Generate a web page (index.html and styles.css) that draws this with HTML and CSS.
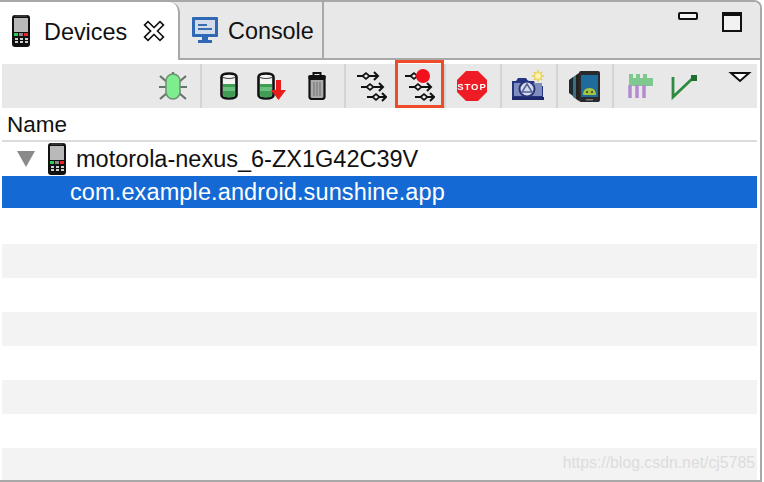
FILE: index.html
```html
<!DOCTYPE html>
<html lang="en">
<head>
  <meta charset="UTF-8">
  <title>Devices</title>
  <link rel="stylesheet" href="styles.css">
</head>
<body>

  <svg class="sprites" width="0" height="0">
    <symbol id="phone" viewBox="0 0 18 32">
      <rect x="0" y="0" width="18" height="32" rx="3" fill="#111"/>
      <rect x="3" y="0" width="12" height="2" fill="#333"/>
      <rect x="2" y="3" width="14" height="14" fill="#b9b9b9"/>
      <rect x="2" y="18" width="4" height="3" fill="#2ecc55"/>
      <rect x="7" y="18" width="4" height="3" fill="#888"/>
      <rect x="12" y="18" width="4" height="3" fill="#e8262a"/>
      <g fill="#cfcfcf">
        <rect x="3" y="23" width="3" height="2"/><rect x="8" y="23" width="3" height="2"/><rect x="13" y="23" width="3" height="2"/>
        <rect x="3" y="26" width="3" height="2"/><rect x="8" y="26" width="3" height="2"/><rect x="13" y="26" width="3" height="2"/>
      </g>
    </symbol>
    <symbol id="threads" viewBox="0 0 32 32">
      <g fill="none" stroke="#111" stroke-width="2.200">
        <path d="M2 6h6M14 6h9"/>
        <path d="M7.500 6l3.500-3 3.500 3-3.500 3z" fill="#eee" stroke-width="1.700"/>
        <path d="M19 2l4 4-4 4" stroke-width="2"/>
        <path d="M6 17h6M18 17h10"/>
        <path d="M11.500 17l3.500-3 3.500 3-3.500 3z" fill="#eee" stroke-width="1.700"/>
        <path d="M24 13l4 4-4 4" stroke-width="2"/>
        <path d="M12 27h6M24 27h7"/>
        <path d="M17.500 27l3.500-3 3.500 3-3.500 3z" fill="#eee" stroke-width="1.700"/>
        <path d="M27 23l4 4-4 4" stroke-width="2"/>
      </g>
    </symbol>
    <symbol id="cylinder" viewBox="0 0 18 28">
      <path d="M1.500 5q0-3.500 7.500-3.500t7.500 3.500v18q0 3.500-7.500 3.500T1.500 23z" fill="#f4f4f4" stroke="#111" stroke-width="2.600"/>
      <path d="M3 5.500q6 2 12 0" fill="none" stroke="#444" stroke-width="1.200"/>
      <path d="M3 12h12v11q0 2.500-6 2.500T3 23z" fill="#3f9d55"/>
      <path d="M3 15h12v4H3z" fill="#6cc07f"/>
    </symbol>
  </svg>

  <div class="view">
    <div class="tabbar">
      <div class="tab tab-active">
        <svg class="icon-phone"><use href="#phone"/></svg>
        <span class="tab-label">Devices</span>
        <svg class="icon-close" viewBox="0 0 20 20">
          <path d="M4 4l12 12M16 4L4 16" stroke="#111" stroke-width="6.500" stroke-linecap="square"/>
          <path d="M4 4l12 12M16 4L4 16" stroke="#fff" stroke-width="3.200" stroke-linecap="square"/>
        </svg>
      </div>
      <div class="tab tab-console">
        <svg class="icon-console" viewBox="0 0 26 26">
          <rect x="0" y="0" width="26" height="20" rx="1" fill="#2f68b4"/>
          <rect x="3" y="3" width="20" height="14" fill="#d4dcea"/>
          <path d="M6 7h9v2H6zM6 11h14v2H6z" fill="#3a6cae"/>
          <path d="M10 20h6v3h4v3H6v-3h4z" fill="#2f68b4"/>
        </svg>
        <span class="tab-label">Console</span>
      </div>
      <div class="win-controls">
        <span class="win-min"></span>
        <span class="win-max"></span>
      </div>
    </div>

    <div class="content">
      <div class="toolbar">
        <div class="group group-first">
          <div class="tool">
            <svg class="icon" viewBox="0 0 32 32">
              <path d="M16 5V2M3 6l7 6M29 6l-7 6M2 17h8M22 17h8M3 29l7-6M29 29l-7-6" stroke="#66756a" stroke-width="2.200" fill="none"/>
              <rect x="9" y="4" width="14" height="25" rx="7" fill="#7ded8e" stroke="#6f8f74" stroke-width="1.500"/>
            </svg>
          </div>
        </div>
        <div class="group group-heap">
          <div class="tool"><svg class="icon-can"><use href="#cylinder"/></svg></div>
          <div class="tool">
            <svg class="icon" viewBox="0 0 32 32">
              <use href="#cylinder" x="0" y="2" width="18" height="28"/>
              <path d="M19 10h5v10h5l-7.500 10L14 20h5z" fill="#e81c1c"/>
            </svg>
          </div>
          <div class="tool">
            <svg class="icon" viewBox="0 0 32 32">
              <path d="M12.500 5V3h7v2" fill="none" stroke="#111" stroke-width="2"/>
              <rect x="7" y="5" width="18" height="4" rx="2" fill="#111"/>
              <path d="M8.500 9h15v18q0 2-3 2h-9q-3 0-3-2z" fill="#aaa" stroke="#111" stroke-width="2.200"/>
              <path d="M13 12v14M16 12v14M19 12v14" stroke="#7a7a7a" stroke-width="1.200"/>
            </svg>
          </div>
        </div>
        <div class="group group-threads">
          <div class="tool-wide"><svg class="icon"><use href="#threads"/></svg></div>
          <div class="tool-wide tool-marked">
            <svg class="icon" viewBox="0 0 32 32">
              <use href="#threads" x="0" y="0" width="32" height="32"/>
              <circle cx="20" cy="6" r="7" fill="#f2101c"/>
            </svg>
          </div>
        </div>
        <div class="group">
          <div class="tool-fill">
            <svg class="icon" viewBox="0 0 32 32">
              <path d="M10 1h12l9 9v12l-9 9H10l-9-9V10z" fill="#ee1c25"/>
              <text class="stop-text" x="16" y="20" text-anchor="middle">STOP</text>
            </svg>
          </div>
        </div>
        <div class="group">
          <div class="tool-fill">
            <svg class="icon" viewBox="0 0 32 32">
              <path d="M26 0v12M20 6h12M22 2l8 8M30 2l-8 8" stroke="#e8cf4a" stroke-width="1.500"/>
              <circle cx="26" cy="6" r="3.500" fill="#fff3b0" stroke="#e8cf4a"/>
              <path d="M0 11h4l2-3h8l2 3h6l2 5h7v14H0z" fill="#26357f"/>
              <rect x="2" y="13" width="28" height="13" fill="#7f8dbd"/>
              <rect x="0" y="27" width="32" height="3" fill="#1c2868"/>
              <circle cx="15" cy="19" r="7.500" fill="#d6dbea" stroke="#26357f" stroke-width="2"/>
              <path d="M15 14l5 8H10z" fill="none" stroke="#55619a" stroke-width="1.500"/>
            </svg>
          </div>
        </div>
        <div class="group">
          <div class="tool-fill">
            <svg class="icon" viewBox="0 0 32 32">
              <path d="M1 10l4-3v19l-4-3z" fill="#1d2a30"/>
              <path d="M5 7l3-2v24l-3-2z" fill="#3c6e80"/>
              <path d="M8 5l3-2v28l-3-2z" fill="#222"/>
              <rect x="11" y="1" width="21" height="31" rx="2" fill="#2a2a2c"/>
              <rect x="13" y="5" width="17" height="22" fill="#1f6c9c"/>
              <path d="M15 25q0-7 6.500-7t6.500 7z" fill="#a5c43b"/>
              <circle cx="19" cy="22" r="1" fill="#333"/>
              <circle cx="24" cy="22" r="1" fill="#333"/>
              <rect x="18" y="29" width="7" height="1.500" fill="#777"/>
            </svg>
          </div>
        </div>
        <div class="group group-last">
          <div class="tool">
            <svg class="icon" viewBox="0 0 32 32">
              <path d="M5 4h4v4h3V4h4v4h3V4h4v4h6v8H5z" fill="#7dc98f"/>
              <path d="M6 15v13M13 15v13M20 15v13" stroke="#b48bd0" stroke-width="3.500"/>
            </svg>
          </div>
          <div class="tool">
            <svg class="icon" viewBox="0 0 32 32">
              <path d="M5 7v20L25 8" fill="none" stroke="#2f8a41" stroke-width="2.800"/>
              <rect x="23" y="5" width="6" height="6" fill="#1f6e31"/>
            </svg>
          </div>
          <div class="tool-menu">
            <svg class="icon" viewBox="0 0 32 32">
              <path d="M7 3h18l-9 8z" fill="#fff" stroke="#111" stroke-width="2"/>
            </svg>
          </div>
        </div>
      </div>

      <div class="tree-head">Name</div>
      <div class="row row-device">
        <svg class="twisty" viewBox="0 0 18 16"><path d="M0 0h18L9 16z" fill="#8a8a8a"/></svg>
        <svg class="icon-phone"><use href="#phone"/></svg>
        <span>motorola-nexus_6-ZX1G42C39V</span>
      </div>
      <div class="row row-selected">com.example.android.sunshine.app</div>
      <div class="row"></div>
      <div class="row row-alt"></div>
      <div class="row"></div>
      <div class="row row-alt"></div>
      <div class="row"></div>
      <div class="row row-alt"></div>
      <div class="row"></div>
      <div class="row row-alt row-end"></div>
    </div>
  </div>

  <div class="watermark">https://blog.csdn.net/cj5785</div>

</body>
</html>
```

FILE: styles.css
```css
* { box-sizing: border-box; }
html, body {
  margin: 0; padding: 0; width: 764px; height: 482px; overflow: hidden;
  font-family: 'Liberation Sans', Arial, sans-serif;
  background-color: white; color: #111;
}
.sprites { display: block; position: absolute; }
svg { display: block; flex: none; overflow: visible; }

.view {
  width: 762px; height: 482px;
  border-top: 2px solid #a8a8a8; border-right: 2px solid #a8a8a8; border-bottom: 2px solid #a8a8a8;
  border-top-right-radius: 8px;
}

.tabbar {
  display: flex; height: 58px; background-color: #e8e8e8;
  border-bottom: 2px solid #a8a8a8; border-top-right-radius: 6px;
}
.tab { display: flex; align-items: center; font-size: 23.400px; }
.tab-label { margin-top: 3px; }
.tab-active {
  width: 180px; height: 58px; padding-left: 12px; background: white;
  border-right: 2px solid #a8a8a8; border-top-right-radius: 10px;
}
.tab-console { width: 144px; padding-left: 12px; border-right: 2px solid #a8a8a8; }
.icon-phone { width: 18px; height: 32px; }
.tab-active .tab-label { margin-left: 14px; }
.tab-console .tab-label { margin-left: 10px; }
.icon-close { width: 20px; height: 20px; margin-left: 17px; }
.icon-console { width: 26px; height: 26px; }

.win-controls { display: flex; gap: 24px; margin-left: auto; padding: 10px 18px 0 0; }
.win-min { width: 20px; height: 8px; border: 2px solid #111; border-radius: 2px; background: #f4f4f4; }
.win-max { width: 20px; height: 20px; border: 2px solid #111; border-top-width: 4px; background: #f2f2f2; }

.content { padding: 4px 3px 0 2px; }

.toolbar { display: flex; height: 44px; margin-bottom: 2px; background-color: #e8e8e8; }
.group { display: flex; width: 56px; border-left: 2px solid #d4d4d4; }
.group-first { width: 198px; justify-content: flex-end; padding-right: 5px; border-left: none; }
.group-heap { width: 144px; padding: 0 5px; }
.group-threads { width: 100px; padding-left: 1px; }
.group-last { flex: 1; padding-left: 4px; }
.tool, .tool-wide, .tool-fill, .tool-menu { display: flex; align-items: center; justify-content: center; }
.tool { width: 44px; }
.tool-wide { width: 48px; }
.tool-fill { width: 52px; }
.tool-menu { width: 34px; margin-left: auto; }
.icon, .icon-can { filter: blur(0.4px); }
.icon { width: 32px; height: 32px; }
.icon-can { width: 18px; height: 28px; }
.stop-text { font-size: 9.500px; font-weight: bold; letter-spacing: 1px; fill: white; }

.tool-marked { position: relative; }
.tool-marked::after {
  content: ""; position: absolute; left: 0; right: -1px; top: -4px; bottom: 0;
  border: 3px solid #ee4b2b;
}

.tree-head {
  height: 32px; padding: 1px 0 0 5px; font-size: 22.500px; line-height: 27px;
  border-bottom: 2px solid #dcdcdc;
}
.row { height: 34px; font-size: 23.500px; }
.row-device { display: flex; align-items: center; padding-left: 15px; }
.twisty { width: 18px; height: 16px; margin-right: 13px; }
.row-device span { margin-left: 10px; }
.row-selected {
  height: 32px; margin-bottom: 2px; padding-left: 68px; line-height: 32px;
  letter-spacing: 0.12px; background-color: #1569d4; color: white;
}
.row-alt { background-color: #f3f3f3; }
.row-end { height: 32px; }

.watermark {
  position: absolute; right: 9px; bottom: 10px;
  font-size: 15.800px; color: #dcdcdc;
}
```
